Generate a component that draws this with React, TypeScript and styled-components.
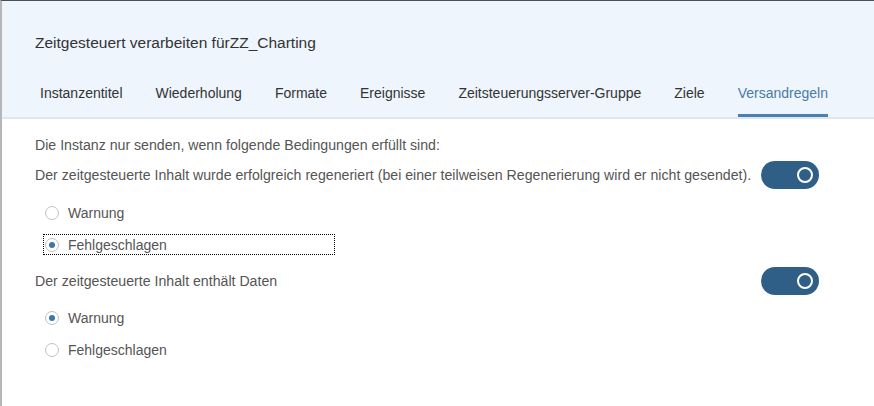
import styled, { createGlobalStyle } from "styled-components"

const GlobalStyle = createGlobalStyle`
  html, body {
    margin: 0;
    padding: 0;
    background: #ffffff;
  }
  body {
    font-family: "Liberation Sans", Arial, sans-serif;
  }
`

const Frame = styled.div`
  width: 874px;
  height: 406px;
  box-sizing: border-box;
  border-top: 1px solid #4b5058;
  border-left: 2px solid #b4b6b9;
  background: #ffffff;
  overflow: hidden;
`

const Header = styled.div`
  background: #eef5fd;
  border-bottom: 2px solid #dde7f1;
  padding: 32px 0 0 33px;
`

const Title = styled.h1`
  margin: 0;
  font-size: 15.5px;
  font-weight: normal;
  color: #333333;
  line-height: 20px;
`

const Tabs = styled.div`
  display: flex;
  gap: 33px;
  margin-top: 31px;
  padding-left: 5px;
`

const Tab = styled.div<{ $active?: boolean }>`
  font-size: 14px;
  line-height: 18px;
  padding-bottom: 12px;
  color: ${p => (p.$active ? "#4a7aa8" : "#333333")};
  border-bottom: 3px solid ${p => (p.$active ? "#4a7fb0" : "transparent")};
`

const Content = styled.div`
  padding: 16px 55px 0 33px;
  color: #555555;
  font-size: 14.15px;
`

const Intro = styled.div`
  line-height: 20px;
`

const ToggleRow = styled.div<{ $top: number }>`
  display: flex;
  align-items: center;
  justify-content: space-between;
  margin-top: ${p => p.$top}px;
  height: 28px;
`

const Toggle = styled.div`
  width: 58px;
  height: 28px;
  border-radius: 14px;
  background: #2f5f87;
  position: relative;
  flex-shrink: 0;
`

const Knob = styled.span`
  position: absolute;
  right: 6px;
  top: 6px;
  width: 16px;
  height: 16px;
  box-sizing: border-box;
  border-radius: 50%;
  border: 2.5px solid #ffffff;
`

const RadioRow = styled.div<{ $top: number; $focused?: boolean }>`
  display: flex;
  align-items: center;
  gap: 9px;
  width: 292px;
  height: 21px;
  box-sizing: border-box;
  margin: ${p => p.$top}px 0 0 8px;
  padding-left: 1px;
  border: 1px dotted ${p => (p.$focused ? "#000000" : "transparent")};
`

const RadioCircle = styled.span<{ $checked?: boolean }>`
  width: 14px;
  height: 14px;
  box-sizing: border-box;
  border-radius: 50%;
  border: 1.5px solid #c2c2c2;
  background: #ffffff;
  display: flex;
  align-items: center;
  justify-content: center;
  &::after {
    content: "";
    width: 6px;
    height: 6px;
    border-radius: 50%;
    background: ${p => (p.$checked ? "#3b77ab" : "transparent")};
  }
`

const RadioLabel = styled.span`
  font-size: 14px;
  color: #555555;
`

const tabs = [
  "Instanzentitel",
  "Wiederholung",
  "Formate",
  "Ereignisse",
  "Zeitsteuerungsserver-Gruppe",
  "Ziele",
  "Versandregeln",
]

const Radio = ({ label, checked, focused, top }: { label: string; checked?: boolean; focused?: boolean; top: number }) => (
  <RadioRow $top={top} $focused={focused}>
    <RadioCircle $checked={checked} />
    <RadioLabel>{label}</RadioLabel>
  </RadioRow>
)

const App = (): JSX.Element => {
  return (
    <>
      <GlobalStyle />
      <Frame>
        <Header>
          <Title>Zeitgesteuert verarbeiten fürZZ_Charting</Title>
          <Tabs>
            {tabs.map(t => (
              <Tab key={t} $active={t === "Versandregeln"}>{t}</Tab>
            ))}
          </Tabs>
        </Header>
        <Content>
          <Intro>Die Instanz nur senden, wenn folgende Bedingungen erfüllt sind:</Intro>
          <ToggleRow $top={6}>
            <span>Der zeitgesteuerte Inhalt wurde erfolgreich regeneriert (bei einer teilweisen Regenerierung wird er nicht gesendet).</span>
            <Toggle><Knob /></Toggle>
          </ToggleRow>
          <Radio label="Warnung" top={13} />
          <Radio label="Fehlgeschlagen" checked focused top={11} />
          <ToggleRow $top={12}>
            <span>Der zeitgesteuerte Inhalt enthält Daten</span>
            <Toggle><Knob /></Toggle>
          </ToggleRow>
          <Radio label="Warnung" checked top={12} />
          <Radio label="Fehlgeschlagen" top={11} />
        </Content>
      </Frame>
    </>
  )
}

export default App
